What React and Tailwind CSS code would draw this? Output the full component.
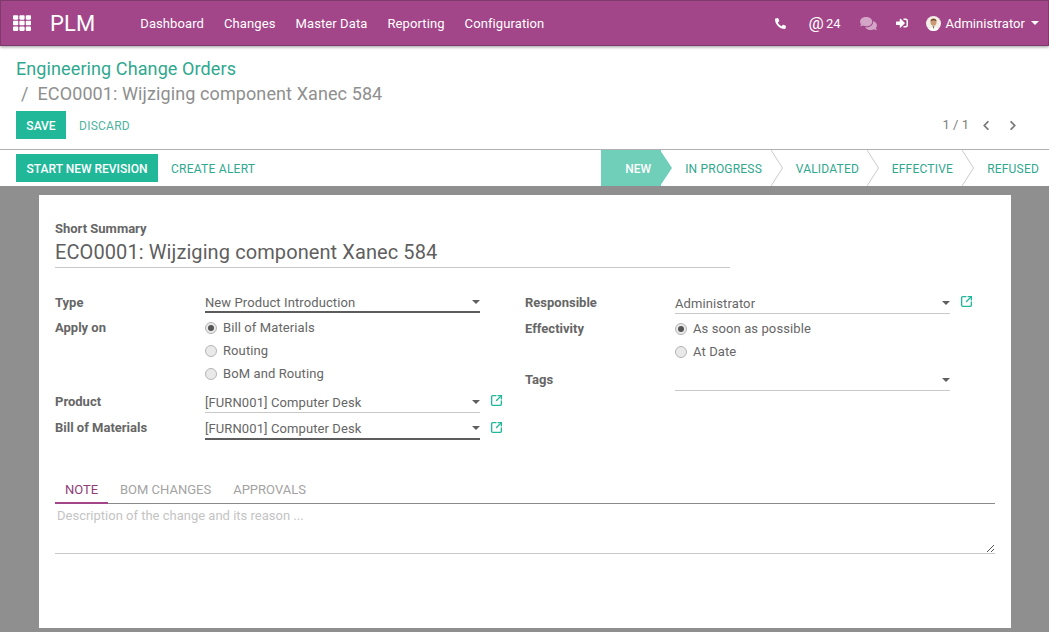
import React from "react";
import { FaTh, FaPhone, FaComments, FaSignInAlt, FaChevronLeft, FaChevronRight } from "react-icons/fa";
import { SquareArrowOutUpRight } from "lucide-react";

const menu = ["Dashboard", "Changes", "Master Data", "Reporting", "Configuration"];
const stages = [
  { label: "IN PROGRESS", box: "w-[111px] pr-[10px]" },
  { label: "VALIDATED", box: "w-[96px] pr-[9px]" },
  { label: "EFFECTIVE", box: "w-[95px] pr-[10px]" },
  { label: "REFUSED", box: "w-[86px] pr-[10px]" },
];

const Caret = ({ className = "text-[#5f5f5f]" }) => (
  <svg viewBox="0 0 8 4" className={`w-[8px] h-[4px] shrink-0 ${className}`}>
    <path d="M0 0H8L4 4Z" fill="currentColor" />
  </svg>
);

const Avatar = () => (
  <svg viewBox="0 0 16 16" className="w-[15px] h-[15px]">
    <circle cx="8" cy="8" r="8" fill="#f3eee8" />
    <ellipse cx="8" cy="6.5" rx="3.2" ry="4" fill="#c99a73" />
    <path d="M4.8 5.5C4.8 2.5 11.2 2.5 11.2 5.5C9.5 4.3 6.5 4.3 4.8 5.5Z" fill="#5b3a25" />
    <path d="M3 14.5C3.5 11 12.5 11 13 14.5C11 16.4 5 16.4 3 14.5Z" fill="#ffffff" />
    <path d="M7 11L8 14L9 11Z" fill="#7b6a55" />
  </svg>
);

const Label = ({ children, className = "pt-[1px]" }) => (
  <div className={`w-[150px] shrink-0 text-[13px] font-bold text-[#666666] ${className}`}>{children}</div>
);

const Select = ({ value, link, className = "h-[22px] border-b border-[#c8c8c8]" }) => (
  <div className="flex items-center">
    <div className={`w-[275px] flex items-center justify-between text-[13px] text-[#666666] tracking-[0.1px] ${className}`}>
      <span className="pt-[2px]">{value}</span>
      <Caret />
    </div>
    {link && <SquareArrowOutUpRight className="w-[13px] h-[13px] ml-[10px] -mt-[3px] text-[#21b799]" strokeWidth={2.5} />}
  </div>
);

const Radio = ({ label, checked }) => (
  <div className="h-[23px] flex items-center gap-[6px] text-[13px] text-[#666666] tracking-[0.1px]">
    <span className="w-[12px] h-[12px] rounded-full border border-[#b5b5b5] bg-[#e9e9e9] flex items-center justify-center">
      {checked && <span className="w-[6px] h-[6px] rounded-full bg-[#555555]" />}
    </span>
    {label}
  </div>
);

export default function App() {
  return (
    <div className="w-[1049px] h-[632px] overflow-hidden flex flex-col bg-[#8f8f8f] font-['Roboto',sans-serif]">
      {/* Navbar */}
      <header className="relative z-10 h-[46px] shrink-0 flex items-center bg-[#a24689] border border-[#7e3a6c] shadow-[0_1px_3px_rgba(0,0,0,0.4)] text-white">
        <FaTh className="w-[18px] h-[18px] ml-[12px]" />
        <span className="ml-[19px] pt-[2px] text-[22px] leading-none tracking-[0.1px]">PLM</span>
        <nav className="ml-[45px] pt-[2px] flex gap-[20px] text-[13px] tracking-[0.1px]">
          {menu.map((item) => (
            <span key={item}>{item}</span>
          ))}
        </nav>
        <div className="ml-auto flex items-center pr-[9px] text-[13px]">
          <FaPhone className="w-[11px] h-[11px] -scale-x-100" />
          <span className="ml-[23px] text-[17px] leading-none">@</span>
          <span className="ml-[2px] pt-[2px]">24</span>
          <FaComments className="ml-[19px] w-[17px] h-[15px] text-[#d3a5c7]" />
          <FaSignInAlt className="ml-[19px] w-[12px] h-[12px]" />
          <span className="ml-[18px]"><Avatar /></span>
          <span className="ml-[5px] pt-[2px] tracking-[0.05px]">Administrator</span>
          <Caret className="ml-[6px] text-white" />
        </div>
      </header>

      {/* Control panel */}
      <div className="h-[104px] shrink-0 bg-white border-b border-[#b0b0b0] pl-[16px] pr-[31px] pt-[11px]">
        <div className="text-[18px] leading-[24px] text-[#2fa88f] tracking-[0.1px]">Engineering Change Orders</div>
        <div className="text-[18px] leading-[25px] text-[#8f8f8f] pl-[5px] tracking-[0.1px]">
          <span className="mr-[9px]">/</span>ECO0001: Wijziging component Xanec 584
        </div>
        <div className="mt-[5px] flex items-center justify-between">
          <div className="flex items-center">
            <button className="w-[50px] h-[28px] pt-[1px] bg-[#21b799] text-white text-[12px] font-medium">SAVE</button>
            <span className="ml-[13px] pt-[1px] text-[12px] text-[#4fb3a0] tracking-[0.25px]">DISCARD</span>
          </div>
          <div className="flex items-center text-[13px] text-[#808080]">
            <span>1 / 1</span>
            <FaChevronLeft className="ml-[12px] w-[10px] h-[11px] text-[#7a7a7a]" />
            <FaChevronRight className="ml-[17px] w-[10px] h-[11px] text-[#7a7a7a]" />
          </div>
        </div>
      </div>

      {/* Status bar */}
      <div className="h-[36px] shrink-0 bg-white flex items-stretch pl-[16px]">
        <div className="flex items-start pt-[4px]">
          <button className="w-[142px] h-[28px] pt-[1px] bg-[#21b799] text-white text-[12px] font-medium">START NEW REVISION</button>
          <span className="ml-[13px] h-[28px] pt-[1px] flex items-center text-[12px] text-[#2fa88f] tracking-[0.25px]">CREATE ALERT</span>
        </div>
        <div className="ml-auto flex items-stretch">
          <div className="relative w-[60px] bg-[#6fcfb9] flex items-center justify-end pr-[10px] pt-[1px] text-[12px] font-medium text-white">
            NEW
            <svg viewBox="0 0 12 37" preserveAspectRatio="none" className="absolute top-0 -right-[11px] w-[12px] h-full">
              <path d="M0 0L12 18.5L0 37Z" fill="#6fcfb9" />
            </svg>
          </div>
          {stages.map((stage, index) => (
            <div key={stage.label} className={`relative ${stage.box} flex items-center justify-end pt-[1px] text-[12px] text-[#2fa88f] tracking-[0.2px]`}>
              {stage.label}
              {index < stages.length - 1 && (
                <svg viewBox="0 0 12 37" preserveAspectRatio="none" className="absolute top-0 -right-[11px] w-[12px] h-full">
                  <path d="M0 0L11.5 18.5L0 37" fill="none" stroke="#c9c9c9" strokeWidth="1" />
                </svg>
              )}
            </div>
          ))}
        </div>
      </div>

      {/* Form sheet */}
      <main className="ml-[39px] mt-[9px] w-[972px] h-[433px] shrink-0 bg-white px-[16px] pt-[26px]">
        <div className="text-[13px] font-bold leading-[15px] text-[#666666]">Short Summary</div>
        <div className="w-[675px] h-[31px] mt-[1px] border-b border-[#c8c8c8] text-[20px] leading-[30px] text-[#5f5f5f] tracking-[0.09px]">
          ECO0001: Wijziging component Xanec 584
        </div>

        <div className="mt-[24px] flex">
          <div className="w-[470px] shrink-0">
            <div className="flex h-[24px] items-start">
              <Label>Type</Label>
              <Select value="New Product Introduction" className="h-[21px] border-b-2 border-[#5c5c5c]" />
            </div>
            <div className="flex">
              <Label className="pt-[2px]">Apply on</Label>
              <div>
                <Radio label="Bill of Materials" checked />
                <Radio label="Routing" />
                <Radio label="BoM and Routing" />
              </div>
            </div>
            <div className="flex h-[26px] mt-[6px] items-start">
              <Label>Product</Label>
              <Select value="[FURN001] Computer Desk" link />
            </div>
            <div className="flex h-[26px] items-start">
              <Label>Bill of Materials</Label>
              <Select value="[FURN001] Computer Desk" link className="h-[23px] pt-[1px] border-b-2 border-[#5c5c5c]" />
            </div>
          </div>

          <div>
            <div className="flex h-[25px] items-start">
              <Label>Responsible</Label>
              <Select value="Administrator" link />
            </div>
            <div className="flex">
              <Label className="pt-[2px]">Effectivity</Label>
              <div>
                <Radio label="As soon as possible" checked />
                <Radio label="At Date" />
              </div>
            </div>
            <div className="flex h-[26px] mt-[6px] items-start">
              <Label>Tags</Label>
              <Select value="" />
            </div>
          </div>
        </div>

        {/* Tabs */}
        <div className="mt-[34px] h-[27px] flex border-b border-[#8a8a8a] text-[13px] text-[#a3a3a3]">
          <span className="w-[53px] h-[27px] text-center leading-[26px] text-[#8f3f78] border-b-2 border-[#a24689]">NOTE</span>
          <span className="ml-[12px] leading-[26px]">BOM CHANGES</span>
          <span className="ml-[22px] leading-[26px]">APPROVALS</span>
        </div>
        <div className="relative h-[50px] border-b border-[#c8c8c8] pl-[2px] pt-[4px] text-[13px] leading-[15px] text-[#c4c4c4]">
          Description of the change and its reason ...
          <svg viewBox="0 0 10 10" className="absolute right-0 bottom-0 w-[10px] h-[10px]">
            <path d="M9 2L2 9M9 6L6 9" stroke="#555555" strokeWidth="1" fill="none" />
          </svg>
        </div>
      </main>
    </div>
  );
}
